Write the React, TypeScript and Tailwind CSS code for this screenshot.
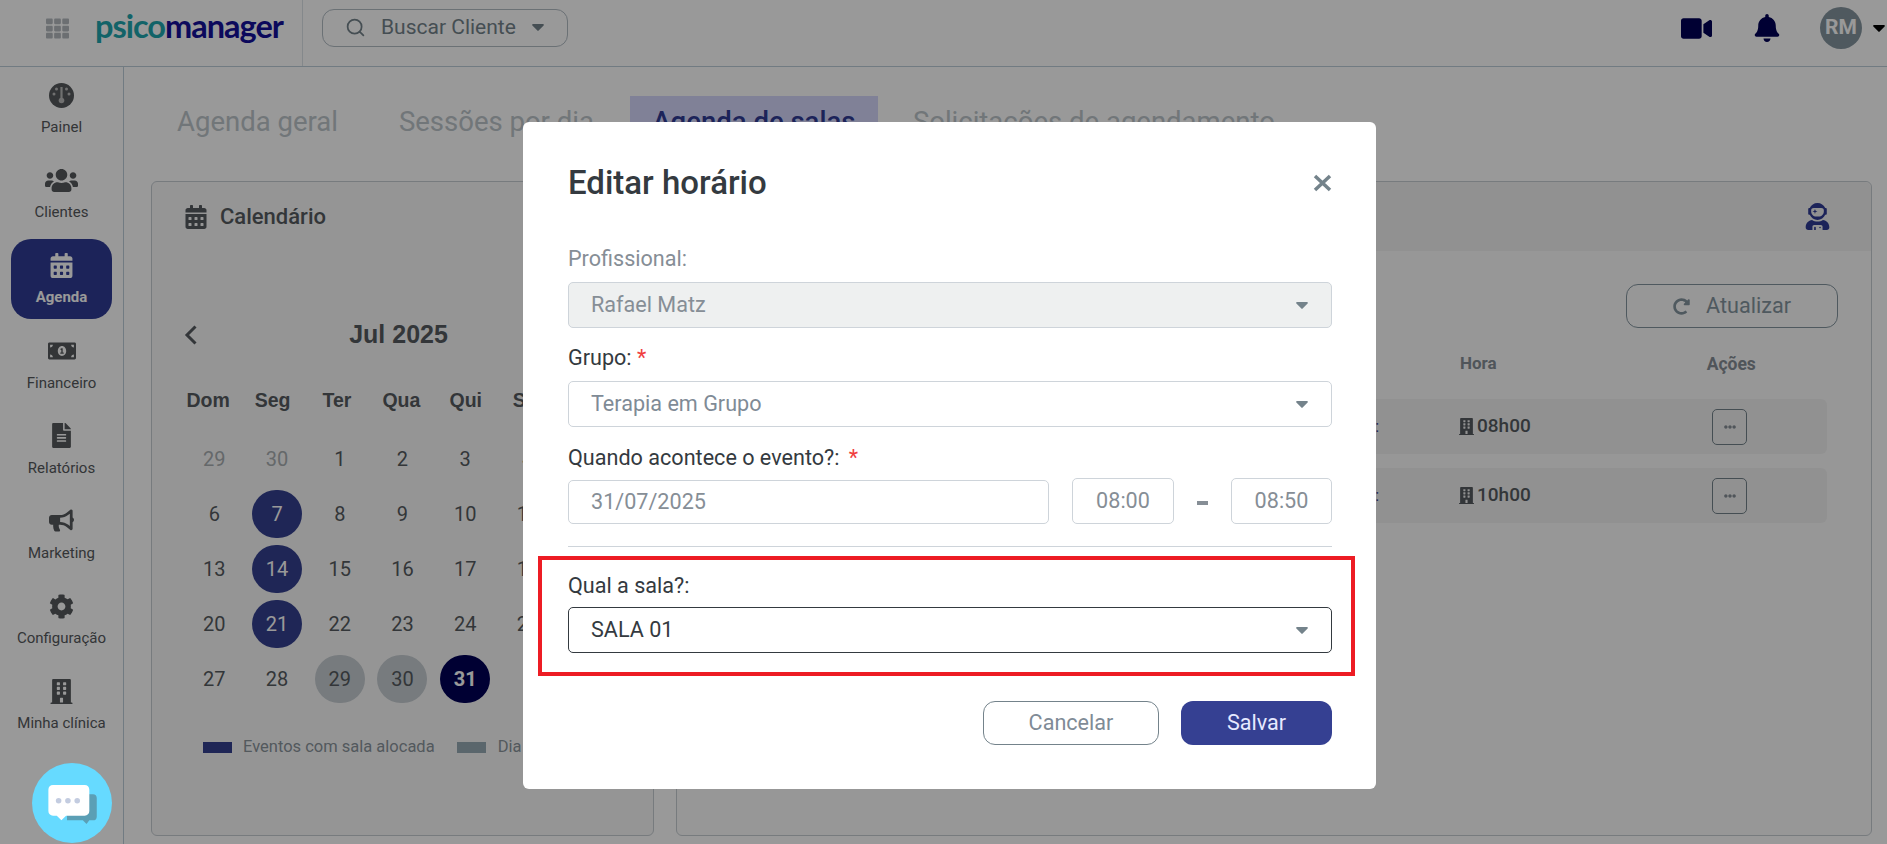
import React from "react";
import {
  FaCalendarAlt,
  FaUsers,
  FaMoneyBillAlt,
  FaFileAlt,
  FaBullhorn,
  FaCog,
  FaBuilding,
  FaVideo,
  FaBell,
  FaUserAstronaut,
  FaEllipsisH,
  FaTh,
  FaRedoAlt,
} from "react-icons/fa";
import { Search } from "lucide-react";

function Gauge() {
  return (
    <svg width="25" height="25" viewBox="0 0 25 25">
      <circle cx="12.5" cy="12.5" r="12.5" fill="#55595c" />
      <circle cx="5" cy="11" r="1.5" fill="#bbb" />
      <circle cx="7.5" cy="6" r="1.5" fill="#bbb" />
      <circle cx="17.5" cy="6" r="1.5" fill="#bbb" />
      <circle cx="20" cy="11" r="1.5" fill="#bbb" />
      <rect x="11.4" y="4" width="2.2" height="12" fill="#bbb" />
      <circle cx="12.5" cy="17.5" r="2.8" fill="#bbb" />
    </svg>
  );
}

function Caret({ className }: { className: string }) {
  return (
    <svg width="12" height="7" viewBox="0 0 12 7" className={className}>
      <path d="M1 0h10c.8 0 1.2 1 .6 1.5L6.6 6.6c-.3.4-.9.4-1.2 0L.4 1.500C-.2 1 .2 0 1 0z" fill="currentColor" />
    </svg>
  );
}

function ChatIcon() {
  return (
    <svg width="51" height="40" viewBox="0 0 54 43">
      <path d="M20 10h28c2.500 0 4 1.500 4 4v20c0 2.500-1.500 4-4 4h-4l-3 4-4-4H20z" fill="#5b9fb5" />
      <path d="M5 0h34c3 0 5 2 5 5v23c0 3-2 5-5 5H19l-5 5-5-5H5c-3 0-5-2-5-5V5c0-3 2-5 5-5z" fill="#fff" />
      <circle cx="11" cy="17" r="3" fill="#c3cce0" />
      <circle cx="21" cy="17" r="3" fill="#c3cce0" />
      <circle cx="31" cy="17" r="3" fill="#c3cce0" />
    </svg>
  );
}

const nav = [
  { label: "Painel", icon: <Gauge /> },
  { label: "Clientes", icon: <FaUsers size={33} /> },
  { label: "Agenda", icon: <FaCalendarAlt size={25} />, active: true },
  { label: "Financeiro", icon: <FaMoneyBillAlt size={28} /> },
  { label: "Relatórios", icon: <FaFileAlt size={25} /> },
  { label: "Marketing", icon: <FaBullhorn size={25} /> },
  { label: "Configuração", icon: <FaCog size={25} /> },
  { label: "Minha clínica", icon: <FaBuilding size={25} /> },
];

const weeks: (string | number)[][] = [
  [29, 30, 1, 2, 3, 4, 5],
  [6, 7, 8, 9, 10, 11, 12],
  [13, 14, 15, 16, 17, 18, 19],
  [20, 21, 22, 23, 24, 25, 26],
  [27, 28, 29, 30, 31, "", ""],
];

function dayClass(r: number, d: string | number) {
  if (r === 0 && (d === 29 || d === 30)) return "text-[#a9aeb1]";
  if (r > 0 && r < 4 && (d === 7 || d === 14 || d === 21)) return "bg-[#34408f] text-white";
  if (r === 4 && (d === 29 || d === 30)) return "bg-[#c6cdd2] text-[#555b60]";
  if (r === 4 && d === 31) return "bg-[#000055] text-white font-bold";
  return "text-[#555b60]";
}

function Field({
  label,
  req,
  muted,
  children,
}: {
  label: string;
  req?: boolean;
  muted?: boolean;
  children: React.ReactNode;
}) {
  return (
    <div className="flex flex-col">
      <div className={`h-[24px] text-[21.6px] leading-[24px] ${muted ? "text-[#868e96]" : "text-[#343a40]"}`}>
        {label}
        {req && <span className="text-[#f03e3e]"> *</span>}
      </div>
      {children}
    </div>
  );
}

function Select({ value, disabled, dark }: { value: string; disabled?: boolean; dark?: boolean }) {
  return (
    <div
      className={`flex h-[46px] items-center justify-between rounded-[5px] border pl-[22px] pr-[23px] text-[21.6px] ${
        dark ? "mt-[9px]" : "mt-[11px]"
      } ${
        disabled
          ? "border-[#ced4da] bg-[#eef0f0] text-[#868e96]"
          : dark
            ? "border-[#343a40] bg-white text-[#343a40]"
            : "border-[#ced4da] bg-white text-[#7f8b96]"
      }`}
    >
      <span>{value}</span>
      <Caret className="text-[#74838b]" />
    </div>
  );
}

function Row({ time }: { time: string }) {
  return (
    <div className="flex h-[55px] items-center rounded-[6px] bg-[#f2f2f2] pl-[25px]">
      <span className="w-[677px] text-right text-[16px] text-[#34408f]">Sala 01:</span>
      <span className="ml-[79px] flex w-[254px] items-center gap-[2px] text-[19px] font-medium text-[#555b60]">
        <FaBuilding size={17} />
        {time}
      </span>
      <button className="flex h-[36px] w-[35px] items-center justify-center rounded-[5px] border border-[#74838b] text-[#868e96]">
        <FaEllipsisH size={12} />
      </button>
    </div>
  );
}

export default function App() {
  return (
    <div className="relative h-screen w-screen overflow-hidden bg-white font-['Roboto',sans-serif]">
      <header className="flex h-[67px] items-center border-b border-[#bccdd9] bg-white">
        <div className="flex h-full w-[303px] items-center border-r border-[#dde3e8] pl-[46px]">
          <FaTh size={23} className="mb-[10px] text-[#b4babf]" />
          <span className="mb-[14px] ml-[26px] font-['Lato',sans-serif] text-[32.5px] leading-none font-bold tracking-[-1px]">
            <span className="text-[#1fa6ad]">psico</span>
            <span className="text-[#14109a]">manager</span>
          </span>
        </div>
        <div className="mb-[11px] ml-[19px] flex h-[38px] w-[246px] items-center rounded-[12px] border border-[#b2bcc4] pl-[22px] text-[#74838b]">
          <Search size={21} strokeWidth={2} />
          <span className="ml-[15px] text-[21px]">Buscar Cliente</span>
          <Caret className="ml-[16px] text-[#74838b]" />
        </div>
        <div className="mb-[10px] ml-auto flex items-center">
          <FaVideo size={31} className="text-[#000055]" />
          <FaBell size={28} className="ml-[41px] text-[#000055]" />
          <div className="ml-[39px] flex h-[42px] w-[42px] items-center justify-center rounded-full bg-[#84959f] text-[21px] font-bold text-white">
            RM
          </div>
          <Caret className="mr-[2px] ml-[11px] text-black" />
        </div>
      </header>

      <div className="flex h-[777px]">
        <aside className="flex w-[124px] shrink-0 flex-col border-r border-[#bccdd9] bg-white">
          {nav.map((n) => (
            <div key={n.label} className="h-[85.2px] shrink-0 px-[11px] pt-[2px]">
              <div
                className={`flex h-[80px] flex-col items-center rounded-[20px] pt-[12px] ${
                  n.active ? "bg-[#2f3b95] text-white" : "text-[#55595c]"
                }`}
              >
                <div className="flex h-[28px] items-center justify-center">{n.icon}</div>
                <div className={`mt-[8px] text-[15px] leading-[20px] ${n.active ? "font-bold" : ""}`}>{n.label}</div>
              </div>
            </div>
          ))}
        </aside>

        <main className="min-w-0 flex-1 pt-[29px] pr-[15px] pl-[27px]">
          <div className="flex h-[85px] items-start text-[27.5px]">
            <div className="flex h-[52px] items-center text-[#bcc5ca]">
              <span className="pl-[26px]">Agenda geral</span>
              <span className="ml-[61px]">Sessões por dia</span>
            </div>
            <div className="ml-[36px] flex h-[52px] w-[248px] items-center justify-center bg-[#d6d8fc] font-medium text-[#2f3b95]">
              Agenda de salas
            </div>
            <div className="ml-[35px] flex h-[52px] items-center text-[#bcc5ca]">Solicitações de agendamento</div>
          </div>

          <div className="flex h-[655px] gap-[22px]">
            <section className="flex w-[503px] shrink-0 flex-col rounded-[6px] border border-[#c6cdd2] bg-[#f9f9f9]">
              <div className="flex items-center gap-[12px] pt-[18px] pl-[32px] text-[22px] font-medium text-[#555b60]">
                <FaCalendarAlt size={24} />
                Calendário
              </div>
              <div className="relative mt-[82px] flex h-[40px] items-center justify-center font-['Liberation_Sans',sans-serif] text-[25px] font-bold text-[#555b60]">
                <svg width="14" height="20" viewBox="0 0 14 20" className="absolute top-[10px] left-[32px]">
                  <polyline points="11.500,1.500 3,10 11.500,18.500" fill="none" stroke="currentColor" strokeWidth="3" />
                </svg>
                <span className="pr-[8px]">Jul 2025</span>
              </div>
              <div className="mt-[31px] grid grid-cols-[repeat(7,64.4px)] pl-[24px] font-['Liberation_Sans',sans-serif] text-[19.5px] font-bold text-[#555b60]">
                {["Dom", "Seg", "Ter", "Qua", "Qui", "Sex", "Sáb"].map((d) => (
                  <div key={d} className="text-center">
                    {d}
                  </div>
                ))}
              </div>
              <div className="mt-[16px] flex flex-col pl-[31px]">
                {weeks.map((w, r) => (
                  <div key={r} className="grid h-[55px] w-[439px] grid-cols-7 items-center">
                    {w.map((d, i) => (
                      <div key={i} className="flex justify-center">
                        <div
                          className={`flex h-[48px] w-[50px] items-center justify-center rounded-full text-[20px] ${dayClass(r, d)}`}
                        >
                          {d}
                        </div>
                      </div>
                    ))}
                  </div>
                ))}
              </div>
              <div className="mt-[29px] flex items-center pl-[51px] text-[16.5px] text-[#8a949c]">
                <span className="h-[11px] w-[29px] bg-[#34408f]" />
                <span className="ml-[11px]">Eventos com sala alocada</span>
                <span className="ml-[22px] h-[11px] w-[29px] bg-[#96aab4]" />
                <span className="ml-[12px]">Dia</span>
              </div>
            </section>

            <section className="flex min-w-0 flex-1 flex-col rounded-[6px] border border-[#c6cdd2] bg-[#fcfcfc]">
              <div className="flex h-[69px] items-center justify-end rounded-t-[6px] bg-[#f2f2f2] pr-[40px]">
                <FaUserAstronaut size={27} className="text-[#2f3b95]" />
              </div>
              <div className="flex justify-end pt-[33px] pr-[33px]">
                <button className="flex h-[44px] w-[212px] items-center justify-center gap-[16px] rounded-[12px] border border-[#84959f] text-[21.6px] text-[#84959f]">
                  <FaRedoAlt size={17} />
                  Atualizar
                </button>
              </div>
              <div className="mt-[26px] flex h-[20px] items-center text-[17px] font-bold text-[#868e96]">
                <span className="ml-[783px]">Hora</span>
                <span className="ml-[210px] text-[17.5px]">Ações</span>
              </div>
              <div className="mt-[25px] flex flex-col gap-[14px] pr-[44px]">
                <Row time="08h00" />
                <Row time="10h00" />
              </div>
            </section>
          </div>
        </main>
      </div>

      {/* modal overlay */}
      <div className="absolute inset-0 flex justify-center bg-black/40 pt-[122px]">
        <div className="ml-[12px] h-[667px] w-[853px] rounded-[6px] bg-white pt-[42px] pr-[44px] pl-[45px]">
          <div className="flex h-[38px] items-center justify-between">
            <h2 className="text-[33px] font-medium text-[#343a40]">Editar horário</h2>
            <svg width="19" height="18" viewBox="0 0 19 18" className="text-[#74838b]">
              <path d="M2 2l15 14M17 2L2 16" stroke="currentColor" strokeWidth="3.500" fill="none" />
            </svg>
          </div>
          <div className="mt-[45px] flex flex-col gap-[18px]">
            <Field label="Profissional:" muted>
              <Select value="Rafael Matz" disabled />
            </Field>
            <Field label="Grupo:" req>
              <Select value="Terapia em Grupo" />
            </Field>
          </div>
          <div className="mt-[19px] h-[24px] text-[21.6px] leading-[24px] text-[#343a40]">
            Quando acontece o evento?:<span className="ml-[4px] text-[#f03e3e]"> *</span>
          </div>
          <div className="mt-[8px] flex h-[46px] items-end text-[21.6px] text-[#868e96]">
            <div className="flex h-[44px] w-[481px] items-center rounded-[5px] border border-[#ced4da] pl-[22px]">
              31/07/2025
            </div>
            <div className="ml-[23px] flex h-[46px] w-[102px] items-center justify-center rounded-[5px] border border-[#ced4da]">
              08:00
            </div>
            <div className="mx-[23px] mb-[19px] h-[4px] w-[11px] bg-[#868e96]" />
            <div className="flex h-[46px] w-[101px] items-center justify-center rounded-[5px] border border-[#ced4da]">
              08:50
            </div>
          </div>
          <div className="mt-[22px] h-px bg-[#ced4da]" />
          <div className="mt-[9px] -mr-[23px] -ml-[30px] h-[120px] border-4 border-[#ed1c24] pt-[14px] pr-[19px] pl-[26px]">
            <Field label="Qual a sala?:">
              <Select value="SALA 01" dark />
            </Field>
          </div>
          <div className="mt-[25px] flex justify-end gap-[22px] text-[21.6px]">
            <button className="h-[44px] w-[176px] rounded-[12px] border border-[#74838b] text-[#7f8b96]">Cancelar</button>
            <button className="h-[44px] w-[151px] rounded-[12px] bg-[#354092] text-[#e6e9ff]">Salvar</button>
          </div>
        </div>
      </div>

      {/* chat widget */}
      <div className="absolute top-[763px] left-[32px] flex h-[80px] w-[80px] items-center justify-center rounded-full bg-[#66daff] pt-[4px] pl-[2px]">
        <ChatIcon />
      </div>
    </div>
  );
}
